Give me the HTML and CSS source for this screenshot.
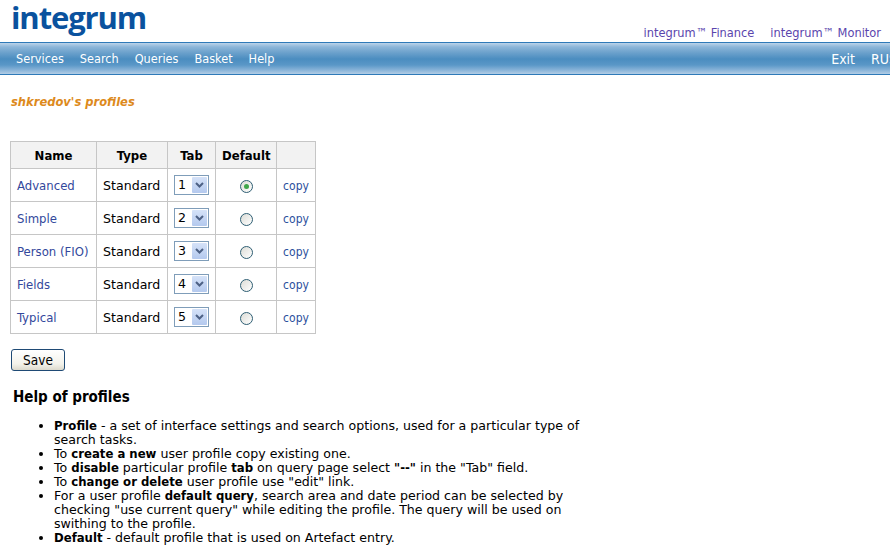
FILE: index.html
```html
<!DOCTYPE html>
<html lang="en">
<head>
<meta charset="utf-8">
<title>integrum profiles</title>
<link rel="stylesheet" href="styles.css">
</head>
<body>
<header class="top">
  <a class="logo" href="#">integrum</a>
  <nav class="products">
    <a href="#">integrum™ Finance</a>
    <a href="#">integrum™ Monitor</a>
  </nav>
</header>
<nav class="bar">
  <div class="bar-left">
    <a href="#">Services</a><a href="#">Search</a><a href="#">Queries</a><a href="#">Basket</a><a href="#">Help</a>
  </div>
  <div class="bar-right">
    <a href="#">Exit</a><a href="#">RUS</a>
  </div>
</nav>
<main class="content">
  <h1 class="title">shkredov's profiles</h1>
  <table class="profiles">
    <thead>
      <tr><th>Name</th><th>Type</th><th>Tab</th><th>Default</th><th></th></tr>
    </thead>
    <tbody>
      <tr>
        <td class="name"><a class="visited" href="#">Advanced</a></td><td>Standard</td>
        <td class="c"><span class="sel"><span class="val">1</span><span class="arrow"><svg width="9" height="6" viewBox="0 0 9 6"><path d="M1 1l3.500 3.500L8 1" fill="none" stroke="#4d6185" stroke-width="2"/></svg></span></span></td>
        <td class="c"><span class="radio on"></span></td><td class="c"><a class="copy" href="#">copy</a></td>
      </tr>
      <tr>
        <td class="name"><a class="visited" href="#">Simple</a></td><td>Standard</td>
        <td class="c"><span class="sel"><span class="val">2</span><span class="arrow"><svg width="9" height="6" viewBox="0 0 9 6"><path d="M1 1l3.500 3.500L8 1" fill="none" stroke="#4d6185" stroke-width="2"/></svg></span></span></td>
        <td class="c"><span class="radio"></span></td><td class="c"><a class="copy" href="#">copy</a></td>
      </tr>
      <tr>
        <td class="name"><a class="visited" href="#">Person (FIO)</a></td><td>Standard</td>
        <td class="c"><span class="sel"><span class="val">3</span><span class="arrow"><svg width="9" height="6" viewBox="0 0 9 6"><path d="M1 1l3.500 3.500L8 1" fill="none" stroke="#4d6185" stroke-width="2"/></svg></span></span></td>
        <td class="c"><span class="radio"></span></td><td class="c"><a class="copy" href="#">copy</a></td>
      </tr>
      <tr>
        <td class="name"><a class="visited" href="#">Fields</a></td><td>Standard</td>
        <td class="c"><span class="sel"><span class="val">4</span><span class="arrow"><svg width="9" height="6" viewBox="0 0 9 6"><path d="M1 1l3.500 3.500L8 1" fill="none" stroke="#4d6185" stroke-width="2"/></svg></span></span></td>
        <td class="c"><span class="radio"></span></td><td class="c"><a class="copy" href="#">copy</a></td>
      </tr>
      <tr>
        <td class="name"><a class="visited" href="#">Typical</a></td><td>Standard</td>
        <td class="c"><span class="sel"><span class="val">5</span><span class="arrow"><svg width="9" height="6" viewBox="0 0 9 6"><path d="M1 1l3.500 3.500L8 1" fill="none" stroke="#4d6185" stroke-width="2"/></svg></span></span></td>
        <td class="c"><span class="radio"></span></td><td class="c"><a class="copy" href="#">copy</a></td>
      </tr>
    </tbody>
  </table>
  <button class="save" type="button">Save</button>
  <h2 class="help-title">Help of profiles</h2>
  <ul class="help">
    <li><b>Profile</b> - a set of interface settings and search options, used for a particular type of search tasks.</li>
    <li>To <b>create a new</b> user profile copy existing one.</li>
    <li>To <b>disable</b> particular profile <b>tab</b> on query page select <b>"--"</b> in the "Tab" field.</li>
    <li>To <b>change or delete</b> user profile use "edit" link.</li>
    <li>For a user profile <b>default query</b>, search area and date period can be selected by checking "use current query" while editing the profile. The query will be used on swithing to the profile.</li>
    <li><b>Default</b> - default profile that is used on Artefact entry.</li>
  </ul>
</main>
</body>
</html>
```
FILE: styles.css
```css
html, body { margin: 0; padding: 0; height: 550px; overflow: hidden; background: #fff; }
body { font-family: "DejaVu Sans", sans-serif; font-size: 12.6px; color: #000; width: 890px; }
a { text-decoration: none; color: #2c4f9c; font-family: "DejaVu Sans Condensed", "DejaVu Sans", sans-serif; }
.top { height: 42px; display: flex; justify-content: space-between; align-items: flex-end; box-sizing: border-box; padding-left: 11px; }
.logo { font-family: "Open Sans", sans-serif; font-weight: 700; font-size: 31px; line-height: 40px; letter-spacing: -1.1px; color: #0a529e; align-self: flex-start; margin-top: -3px; }
.products { display: flex; gap: 16px; padding-right: 9px; padding-bottom: 1px; line-height: 16px; }
.products a { color: #5a45ad; font-size: 12.7px; }
.bar { height: 33px; box-sizing: border-box; border-top: 1px solid #2f7ab8; border-bottom: 1px solid #2f7ab8; display: flex; justify-content: space-between; align-items: center; white-space: nowrap;
  background: linear-gradient(#bcd4ea 0, #8cb6d9 4px, #6fa3cd 9px, #4b8dc0 16px, #5a97c7 22px, #88b3d8 27px, #b2cde6 31px); }
.bar a { color: #fff; font-size: 12.6px; }
.bar-left { display: flex; gap: 16px; padding-left: 16px; }
.bar-right { display: flex; gap: 16px; margin-right: -7px; }
.bar-right a { font-size: 14px; }
.content { padding: 0 10px; }
.title { margin: 19px 0 0 1px; font-family: "DejaVu Sans Condensed", "DejaVu Sans", sans-serif; font-size: 12.8px; line-height: 16px; font-style: italic; font-weight: 700; color: #dd8a1c; }
.profiles { border-collapse: collapse; table-layout: fixed; width: 305px; margin-top: 31px; }
.profiles th, .profiles td { border: 1px solid #c6c6c6; padding: 0 6px; height: 33px; box-sizing: border-box; white-space: nowrap; }
.profiles th { background: #f2f2f2; height: 27px; font-family: "DejaVu Sans Condensed", "DejaVu Sans", sans-serif; font-size: 13px; font-weight: 700; text-align: center; }
.profiles th:nth-child(1) { width: 86px; }
.profiles th:nth-child(2) { width: 71px; }
.profiles th:nth-child(3) { width: 48px; }
.profiles th:nth-child(4) { width: 61px; }
.profiles th:nth-child(5) { width: 39px; }
.profiles td { text-align: left; }
.profiles td.c { text-align: center; }
.name a { font-size: 13px; }
.copy { font-size: 12px; }
.visited { color: #33489c; }
.sel { display: inline-flex; width: 35px; height: 20px; box-sizing: border-box; border: 1px solid #7f9db9; vertical-align: middle; background: #fff; padding: 1px; align-items: stretch; }
.val { flex: 1; text-align: left; padding-left: 2px; line-height: 16px; }
.arrow { width: 15px; background: linear-gradient(#d5e2f8, #b4c9ee); display: flex; align-items: center; justify-content: center; border-radius: 1px; }
.radio { display: inline-block; width: 13px; height: 13px; box-sizing: border-box; border: 1px solid #2f5f74; border-radius: 50%; background: linear-gradient(135deg, #dcdcd6, #fff); vertical-align: middle; position: relative; }
.radio.on::after { content: ""; position: absolute; left: 3px; top: 3px; width: 5px; height: 5px; border-radius: 50%; background: #3fa64a; }
.save { display: block; margin: 15px 0 0 1px; width: 54px; height: 22px; padding: 0; box-sizing: border-box; border: 1px solid #1f4a75; border-radius: 3px; background: linear-gradient(#fff, #f3f2ea 70%, #dcd9cc); font-family: "DejaVu Sans Condensed", "DejaVu Sans", sans-serif; font-size: 13.5px; color: #000; }
.help-title { margin: 17px 0 0 3px; font-family: "DejaVu Sans Condensed", "DejaVu Sans", sans-serif; font-size: 15px; line-height: 18px; font-weight: 700; }
.help { margin: 13px 0 0; padding: 0 0 0 44px; width: 535px; line-height: 14px; list-style: disc; }
.help b { font-family: "DejaVu Sans Condensed", "DejaVu Sans", sans-serif; font-size: 13px; }
```
